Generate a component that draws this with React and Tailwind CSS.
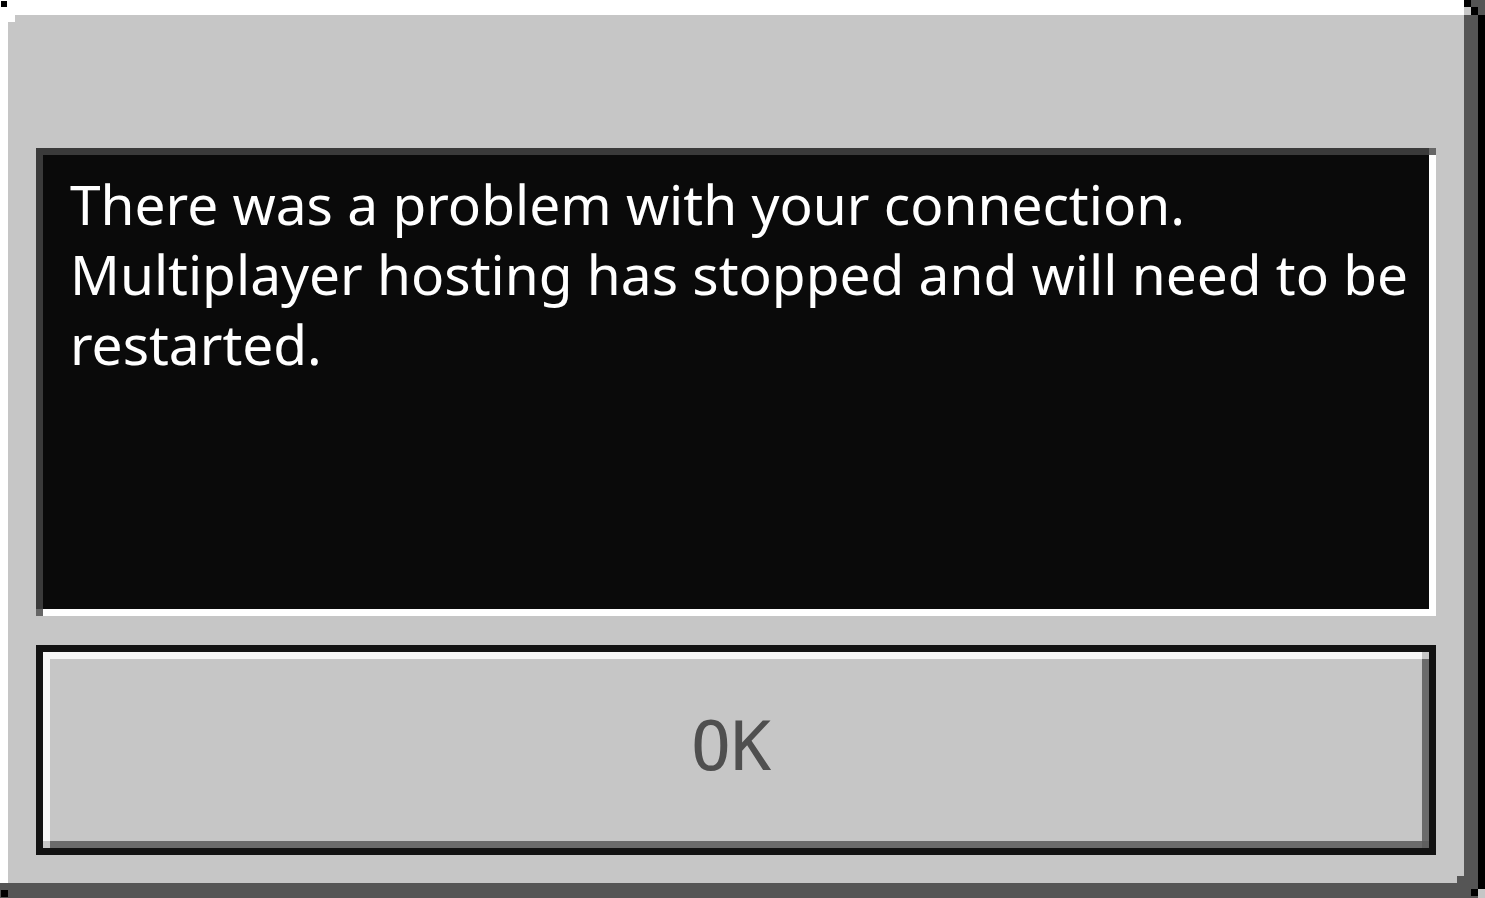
import React from "react";

// 7px square used for the pixel-art bevel corners
function Px({className}) {
    return <div className={`w-[7px] h-[7px] shrink-0 ${className}`}></div>;
}

function MessageBox({children}) {
    return (
        <div className="relative h-[468px] bg-white pr-[7px] pb-[7px]">
            <div className="h-full bg-[#3a3a3a] pt-[7px] pl-[7px]">
                <div className="h-full bg-[#0a0a0a] pl-[27px] pr-[8px] pt-[14px]">
                    <p className="text-white text-[55px] leading-[70px] font-['Noto_Sans',sans-serif]">
                        {children}
                    </p>
                </div>
            </div>
            <Px className="absolute top-0 right-0 bg-[#666666]"/>
            <Px className="absolute bottom-0 left-0 bg-[#666666]"/>
        </div>
    );
}

function OkButton({label}) {
    return (
        <button className="h-[210px] w-full bg-[#121212] p-[7px] cursor-pointer">
            <div className="relative h-full bg-[#6b6b6b] pr-[7px] pb-[7px]">
                <div className="h-full bg-[#f6f6f6] pl-[7px] pt-[7px]">
                    <div className="h-full bg-[#c6c6c6] flex items-center justify-center">
                        <span className="text-[#4f4f4f] text-[67px] leading-none pr-[10px] pb-[6px] font-['DejaVu_Sans_Mono',monospace]">
                            {label}
                        </span>
                    </div>
                </div>
                <Px className="absolute top-0 right-0 bg-[#c6c6c6]"/>
                <Px className="absolute bottom-0 left-0 bg-[#c6c6c6]"/>
                <Px className="absolute bottom-0 right-0 bg-[#5f5f5f]"/>
            </div>
        </button>
    );
}

export default function App() {
    return (
        <div className="flex w-[1485px] h-[898px] overflow-hidden bg-[#555555]">
            <div className="flex flex-col w-[1478px]">
                <div className="flex h-[883px]">
                    {/* light frame (top + left) around the grey panel */}
                    <div className="flex flex-col w-[1464px] bg-white">
                        <div className="h-[15px] pl-[1px] pt-[1px]">
                            <div className="w-[6px] h-[6px] bg-black"></div>
                        </div>
                        <div className="flex flex-1 pl-[8px]">
                            <div className="relative flex-1 bg-[#c6c6c6] flex flex-col gap-[29px] px-[28px] pt-[133px] pb-[28px]">
                                <Px className="absolute top-0 left-0 bg-white"/>
                                <Px className="absolute bottom-0 right-0 bg-[#555555]"/>
                                <MessageBox>
                                    There was a problem with your connection. Multiplayer hosting has stopped and will need to be restarted.
                                </MessageBox>
                                <OkButton label="OK"/>
                            </div>
                        </div>
                    </div>
                    {/* dark frame (right) */}
                    <div className="w-[14px] flex flex-col">
                        <div className="grid grid-cols-2 grid-rows-[7px_8px]">
                            <div className="bg-black"></div>
                            <div></div>
                            <div className="bg-[#c6c6c6]"></div>
                            <div className="bg-black"></div>
                        </div>
                    </div>
                </div>
                {/* dark frame (bottom) */}
                <div className="flex h-[15px] items-start">
                    <Px className="ml-[1px] mt-[7px] bg-black"/>
                    <div className="flex-1"></div>
                    <Px className="mt-[6px] bg-black"/>
                </div>
            </div>
            {/* outer black edge */}
            <div className="flex flex-col w-[7px]">
                <div className="h-[15px]"></div>
                <div className="h-[874px] bg-black"></div>
                <div className="flex-1 bg-[#c6c6c6]"></div>
            </div>
        </div>
    );
}
